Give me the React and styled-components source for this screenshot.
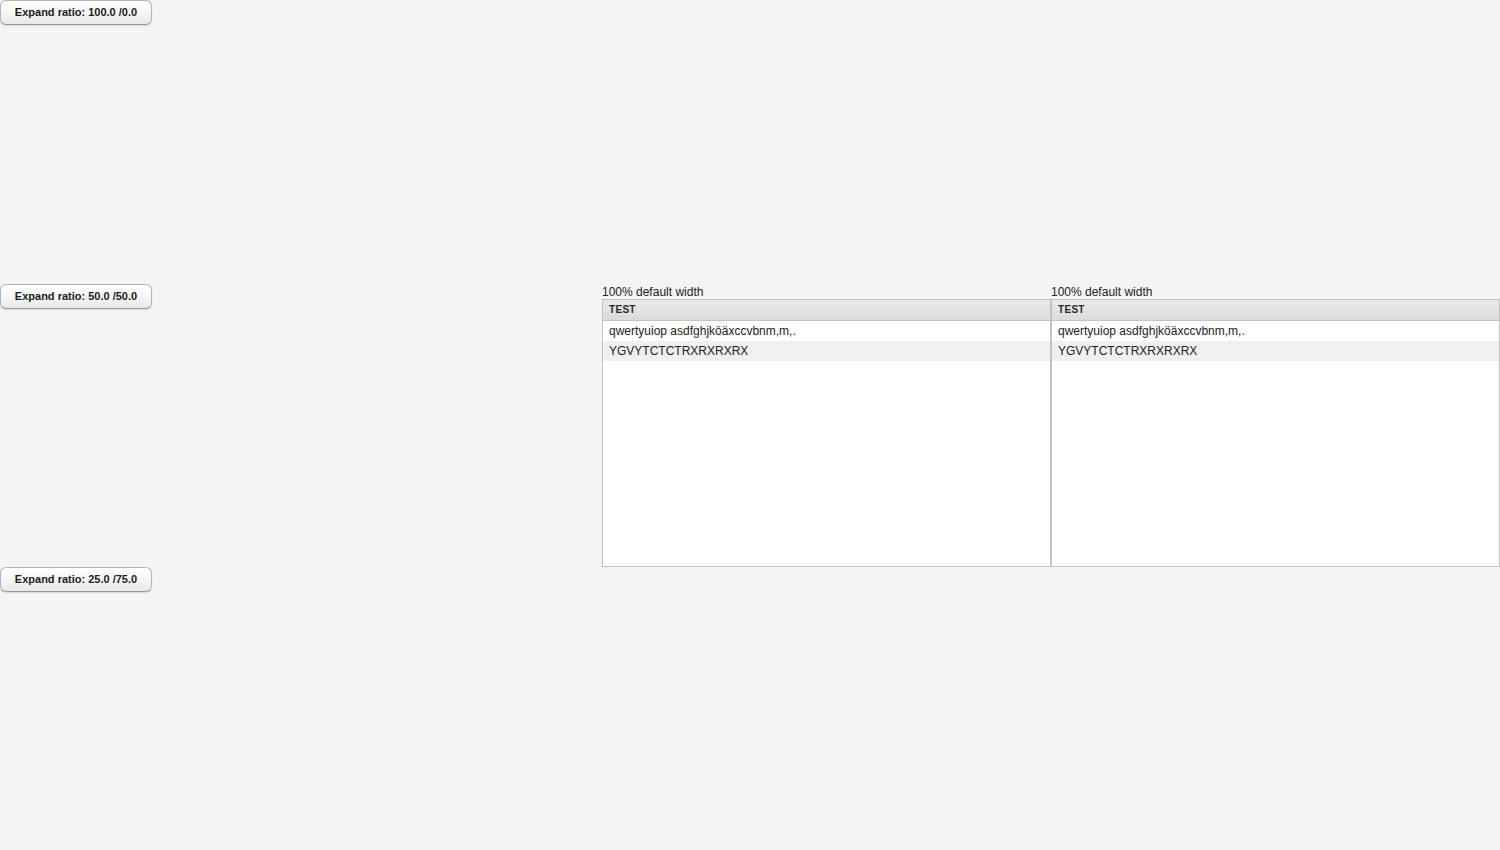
import React from "react";
import styled, { createGlobalStyle } from "styled-components";

const Global = createGlobalStyle`
  html, body { margin: 0; padding: 0; background: #f4f4f4; }
  body { font-family: "Liberation Sans", Arial, sans-serif; color: #222; }
  * { box-sizing: border-box; }
`;

const Page = styled.div`
  width: 1500px;
  height: 850px;
  display: grid;
  grid-template-columns: 602px 898px;
  grid-template-rows: 284px 283px 283px;
  overflow: hidden;
`;

const Cell = styled.div`
  display: flex;
  align-items: flex-start;
  min-width: 0;
`;

const Button = styled.button`
  width: 152px;
  height: 25px;
  padding: 0 6px 1px;
  border: 1px solid #b3b3b3;
  border-bottom-color: #9a9a9a;
  border-radius: 6px;
  background: linear-gradient(to bottom, #ffffff 0%, #f6f6f6 50%, #e8e8e8 100%);
  box-shadow: 0 1px 1px rgba(0, 0, 0, 0.12);
  font-family: "Liberation Sans", Arial, sans-serif;
  font-size: 11px;
  font-weight: bold;
  color: #1b1b1b;
  text-align: center;
  cursor: pointer;
`;

const TablesRow = styled.div`
  display: grid;
  grid-template-columns: 449px 449px;
  width: 898px;
`;

const TableWrap = styled.div`
  display: flex;
  flex-direction: column;
`;

const Caption = styled.div`
  font-size: 12px;
  line-height: 15px;
  height: 15px;
  padding-top: 1px;
  color: #222;
  white-space: nowrap;
`;

const Table = styled.div`
  height: 268px;
  border: 1px solid #c2c2c2;
  background: #fff;
  display: flex;
  flex-direction: column;
`;

const Header = styled.div`
  height: 21px;
  flex: none;
  border-bottom: 1px solid #c4c4c4;
  background: linear-gradient(to bottom, #e9eaeb 0%, #dadbdc 100%);
  padding: 0 6px 1px;
  display: flex;
  align-items: center;
  font-size: 10px;
  font-weight: bold;
  letter-spacing: 0.3px;
  text-transform: uppercase;
  color: #2a2a2a;
`;

const Row = styled.div`
  height: 20px;
  flex: none;
  display: flex;
  align-items: center;
  padding: 0 6px;
  font-size: 12px;
  color: #222;
  white-space: nowrap;
  background: ${(p) => (p.$odd ? "#eff0f1" : "#ffffff")};
`;

const rows = ["qwertyuiop asdfghjköäxccvbnm,m,.", "YGVYTCTCTRXRXRXRX"];

function DataTable() {
  return (
    <TableWrap>
      <Caption>100% default width</Caption>
      <Table>
        <Header>Test</Header>
        {rows.map((r, i) => (
          <Row key={i} $odd={i % 2 === 1}>
            {r}
          </Row>
        ))}
      </Table>
    </TableWrap>
  );
}

export default function App() {
  return (
    <>
      <Global />
      <Page>
        <Cell>
          <Button>Expand ratio: 100.0 /0.0</Button>
        </Cell>
        <Cell />
        <Cell>
          <Button>Expand ratio: 50.0 /50.0</Button>
        </Cell>
        <Cell>
          <TablesRow>
            <DataTable />
            <DataTable />
          </TablesRow>
        </Cell>
        <Cell>
          <Button>Expand ratio: 25.0 /75.0</Button>
        </Cell>
        <Cell />
      </Page>
    </>
  );
}
